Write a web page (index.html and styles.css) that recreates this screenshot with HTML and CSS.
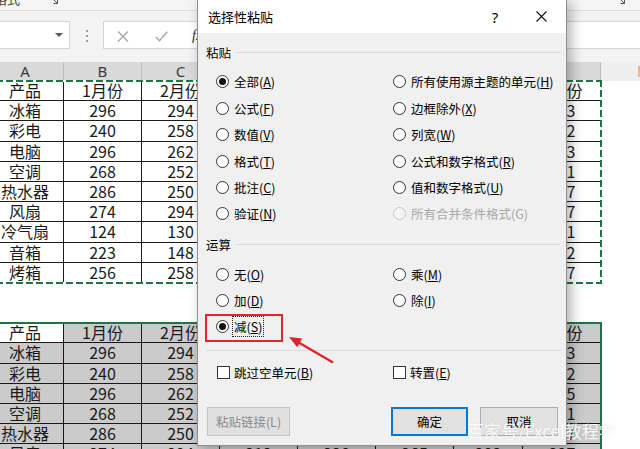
FILE: index.html
```html
<!DOCTYPE html>
<html lang="zh-CN">
<head>
<meta charset="utf-8">
<title>选择性粘贴</title>
<link rel="stylesheet" href="styles.css">
</head>
<body>
<div class="screen">
  <div class="ribbon">
    <span class="rb-text">格式</span>
    <svg class="launcher l1" width="9" height="9" viewBox="0 0 9 9"><path d="M0.5 4V0.5H4M2 2L7.5 7.5M7.5 3.5V7.5H3.5" fill="none" stroke="#555" stroke-width="1"/></svg>
    <svg class="launcher l2" width="9" height="9" viewBox="0 0 9 9"><path d="M0.5 4V0.5H4M2 2L7.5 7.5M7.5 3.5V7.5H3.5" fill="none" stroke="#555" stroke-width="1"/></svg>
  </div>
  <div class="fbar">
    <div class="namebox"><span class="caret"></span></div>
    <div class="grip"><i></i><i></i><i></i></div>
    <div class="fbox">
      <svg class="ic-x" width="12" height="11" viewBox="0 0 12 11"><path d="M1 0.5L11 10.5M11 0.5L1 10.5" stroke="#a6a6a6" stroke-width="1.3" fill="none"/></svg>
      <svg class="ic-check" width="13" height="11" viewBox="0 0 13 11"><path d="M0.8 6L4.5 9.8L12.2 0.8" stroke="#a6a6a6" stroke-width="1.4" fill="none"/></svg>
      <span class="fx">fx</span>
    </div>
  </div>

  <div class="sheet">
    <div class="colhead">
      <div class="ch sel">A</div><div class="ch sel">B</div><div class="ch sel">C</div><div class="ch sel">D</div>
      <div class="ch sel">E</div><div class="ch sel">F</div><div class="ch sel">G</div><div class="ch sel">H</div>
      <div class="ch plain"><span class="mark"></span></div>
    </div>

    <div class="tbl copy">
      <div class="row"><div class="c">产品</div><div class="c">1月份</div><div class="c">2月份</div><div class="c">3月份</div><div class="c">4月份</div><div class="c">5月份</div><div class="c">6月份</div><div class="c">7月份</div></div>
      <div class="row"><div class="c">冰箱</div><div class="c">296</div><div class="c">294</div><div class="c">281</div><div class="c">275</div><div class="c">262</div><div class="c">248</div><div class="c">263</div></div>
      <div class="row"><div class="c">彩电</div><div class="c">240</div><div class="c">258</div><div class="c">247</div><div class="c">236</div><div class="c">229</div><div class="c">241</div><div class="c">252</div></div>
      <div class="row"><div class="c">电脑</div><div class="c">296</div><div class="c">262</div><div class="c">278</div><div class="c">269</div><div class="c">284</div><div class="c">290</div><div class="c">273</div></div>
      <div class="row"><div class="c">空调</div><div class="c">268</div><div class="c">252</div><div class="c">294</div><div class="c">287</div><div class="c">276</div><div class="c">258</div><div class="c">261</div></div>
      <div class="row"><div class="c">热水器</div><div class="c">286</div><div class="c">250</div><div class="c">233</div><div class="c">246</div><div class="c">259</div><div class="c">272</div><div class="c">287</div></div>
      <div class="row"><div class="c">风扇</div><div class="c">274</div><div class="c">294</div><div class="c">212</div><div class="c">238</div><div class="c">265</div><div class="c">283</div><div class="c">297</div></div>
      <div class="row"><div class="c">冷气扇</div><div class="c">124</div><div class="c">130</div><div class="c">156</div><div class="c">171</div><div class="c">182</div><div class="c">195</div><div class="c">201</div></div>
      <div class="row"><div class="c">音箱</div><div class="c">223</div><div class="c">148</div><div class="c">165</div><div class="c">187</div><div class="c">203</div><div class="c">214</div><div class="c">222</div></div>
      <div class="row"><div class="c">烤箱</div><div class="c">256</div><div class="c">258</div><div class="c">243</div><div class="c">231</div><div class="c">264</div><div class="c">255</div><div class="c">247</div></div>
    </div>

    <div class="blank"></div>

    <div class="tbl selected">
      <div class="row"><div class="c active">产品</div><div class="c">1月份</div><div class="c">2月份</div><div class="c">3月份</div><div class="c">4月份</div><div class="c">5月份</div><div class="c">6月份</div><div class="c">7月份</div></div>
      <div class="row"><div class="c">冰箱</div><div class="c">296</div><div class="c">294</div><div class="c">281</div><div class="c">275</div><div class="c">262</div><div class="c">248</div><div class="c">263</div></div>
      <div class="row"><div class="c">彩电</div><div class="c">240</div><div class="c">258</div><div class="c">247</div><div class="c">236</div><div class="c">229</div><div class="c">241</div><div class="c">252</div></div>
      <div class="row"><div class="c">电脑</div><div class="c">296</div><div class="c">262</div><div class="c">278</div><div class="c">269</div><div class="c">284</div><div class="c">290</div><div class="c">275</div></div>
      <div class="row"><div class="c">空调</div><div class="c">268</div><div class="c">252</div><div class="c">294</div><div class="c">287</div><div class="c">276</div><div class="c">258</div><div class="c">261</div></div>
      <div class="row"><div class="c">热水器</div><div class="c">286</div><div class="c">250</div><div class="c">233</div><div class="c">246</div><div class="c">259</div><div class="c">272</div><div class="c">287</div></div>
      <div class="row"><div class="c">风扇</div><div class="c">274</div><div class="c">294</div><div class="c">212</div><div class="c">238</div><div class="c">265</div><div class="c">283</div><div class="c">297</div></div>
    </div>
  </div>

  <div class="dialog">
    <div class="titlebar">
      <span class="title">选择性粘贴</span>
      <span class="tb-btn help">?</span>
      <span class="tb-btn close"><svg width="11" height="11" viewBox="0 0 11 11"><path d="M0.5 0.5L10.5 10.5M10.5 0.5L0.5 10.5" stroke="#111" stroke-width="1.1" fill="none"/></svg></span>
    </div>

    <div class="group-label"><span>粘贴</span><i class="rule"></i></div>
    <div class="opts paste">
      <label class="opt"><span class="radio on"></span><span class="t">全部(<u>A</u>)</span></label>
      <label class="opt"><span class="radio"></span><span class="t">所有使用源主题的单元(<u>H</u>)</span></label>
      <label class="opt"><span class="radio"></span><span class="t">公式(<u>F</u>)</span></label>
      <label class="opt"><span class="radio"></span><span class="t">边框除外(<u>X</u>)</span></label>
      <label class="opt"><span class="radio"></span><span class="t">数值(<u>V</u>)</span></label>
      <label class="opt"><span class="radio"></span><span class="t">列宽(<u>W</u>)</span></label>
      <label class="opt"><span class="radio"></span><span class="t">格式(<u>T</u>)</span></label>
      <label class="opt"><span class="radio"></span><span class="t">公式和数字格式(<u>R</u>)</span></label>
      <label class="opt"><span class="radio"></span><span class="t">批注(<u>C</u>)</span></label>
      <label class="opt"><span class="radio"></span><span class="t">值和数字格式(<u>U</u>)</span></label>
      <label class="opt"><span class="radio"></span><span class="t">验证(<u>N</u>)</span></label>
      <label class="opt disabled"><span class="radio"></span><span class="t">所有合并条件格式(G)</span></label>
    </div>

    <div class="group-label ops-label"><span>运算</span><i class="rule"></i></div>
    <div class="opts ops">
      <label class="opt"><span class="radio"></span><span class="t">无(<u>O</u>)</span></label>
      <label class="opt"><span class="radio"></span><span class="t">乘(<u>M</u>)</span></label>
      <label class="opt"><span class="radio"></span><span class="t">加(<u>D</u>)</span></label>
      <label class="opt"><span class="radio"></span><span class="t">除(<u>I</u>)</span></label>
      <label class="opt focus"><span class="radio on"></span><span class="t focus-text">减(<u>S</u>)</span><span class="hl"></span></label>
    </div>

    <div class="sep"></div>

    <div class="checks">
      <label class="opt"><span class="cb"></span><span class="t">跳过空单元(<u>B</u>)</span></label>
      <label class="opt"><span class="cb"></span><span class="t">转置(<u>E</u>)</span></label>
    </div>

    <div class="buttons">
      <span class="btn disabled link">粘贴链接(L)</span>
      <span class="btn default ok">确定</span>
      <span class="btn cancel">取消</span>
    </div>
  </div>

  <svg class="arrow" width="640" height="449" viewBox="0 0 640 449">
    <line x1="333" y1="362.5" x2="297" y2="341.5" stroke="#d9252b" stroke-width="2.4"/>
    <polygon points="289,337 302.2,338.4 297.2,347.2" fill="#d9252b"/>
  </svg>

  <div class="watermark">百家号/Excel教程学</div>
</div>
</body>
</html>
```

FILE: styles.css
```css
* { box-sizing: border-box; margin: 0; padding: 0; }
html, body { width: 640px; height: 449px; overflow: hidden; background: #fff; }
body { font-family: "Noto Sans CJK SC", "Noto Sans", sans-serif; color: #000; }

.screen { position: relative; width: 640px; height: 449px; overflow: hidden; background: #fff; }

/* ribbon */
.ribbon {
  height: 11px; background: #f5f5f5; border-bottom: 1px solid #dcdcdc;
  display: flex; align-items: flex-start; overflow: hidden;
}
.rb-text { font-size: 13px; line-height: 13px; margin-top: -8px; margin-left: -6px; color: #444; }
.launcher { flex: none; margin-top: -4px; }
.l1 { margin-left: 30px; }
.l2 { margin-left: auto; margin-right: 14px; }

/* formula bar */
.fbar {
  height: 51px; background: #f3f3f3; display: flex; align-items: flex-start;
  padding-top: 10px;
}
.namebox {
  width: 80px; margin-left: -10px; height: 28px; background: #fff;
  border: 1px solid #d4d4d4; display: flex; align-items: center; justify-content: flex-end;
  padding-right: 6px;
}
.caret { width: 0; height: 0; border-left: 4px solid transparent; border-right: 4px solid transparent; border-top: 4px solid #5a5a5a; }
.grip { margin-left: 16px; margin-top: 9px; display: flex; flex-direction: column; gap: 3px; }
.grip i { display: block; width: 2px; height: 2px; background: #9a9a9a; }
.fbox {
  flex: 1; margin-left: 15px; height: 28px; background: #fff;
  border: 1px solid #d4d4d4; border-right: none; display: flex; align-items: center;
  padding-top: 2px;
}
.ic-x { margin-left: 13px; }
.ic-check { margin-left: 26px; }
.fx { margin-left: 24px; font-family: "Liberation Serif", serif; font-style: italic; font-size: 14px; color: #333; }

/* sheet */
.colhead, .row {
  display: grid;
  grid-template-columns: 77px 78px 78px 78px 78px 78px 69px 78px;
  margin-left: -13px;
}
.colhead { grid-template-columns: 77px 78px 78px 78px 78px 78px 69px 78px 60px; height: 19px; }
.ch {
  background: #d9d9d9; border-right: 1px solid #bdbdbd; font-size: 15px; line-height: 19px;
  text-align: center; color: #3a3a3a; font-family: "Noto Sans", sans-serif;
}
.ch.plain { background: #eeeeee; border-right: none; position: relative; }
.mark { position: absolute; left: 37px; top: 4px; width: 3px; height: 11px; background: #f0b48a; }

.tbl { position: relative; width: 614px; margin-left: -13px; }
.tbl .row { margin-left: 0; height: 20.2px; }
.c {
  border-right: 1px solid #1a1a1a; border-bottom: 1px solid #1a1a1a;
  font-size: 16px; line-height: 19px; text-align: center; white-space: nowrap; overflow: hidden;
  color: #1a1a1a;
}
.copy .c:last-child { border-right: none; }
.copy .row:last-child .c { border-bottom: none; }
.copy::after {
  content: ""; position: absolute; left: -1px; right: -1px; top: -1px; bottom: -1px; pointer-events: none;
  background:
    repeating-linear-gradient(90deg, #217346 0 7px, #fff 7px 10px) left top / 100% 2px no-repeat,
    repeating-linear-gradient(90deg, #217346 0 7px, #fff 7px 10px) left bottom / 100% 2px no-repeat,
    repeating-linear-gradient(180deg, #217346 0 7px, #fff 7px 10px) right top / 2px 100% no-repeat,
    repeating-linear-gradient(180deg, #217346 0 7px, #fff 7px 10px) left top / 2px 100% no-repeat;
}
.blank { height: 40.4px; }
.selected .c { background: #cbcbcb; }
.selected .c.active { background: #fff; }
.selected .c:last-child { border-right: none; }
.selected::after {
  content: ""; position: absolute; left: -1px; right: -1px; top: -1px; bottom: 0; pointer-events: none;
  border-top: 2px solid #217346; border-right: 2px solid #217346;
}

/* dialog */
.dialog {
  position: absolute; left: 197px; top: -1px; width: 370px; height: 447px;
  background: #f0f0f0; border: 1px solid #8f8f8f;
  box-shadow: 4px 3px 12px rgba(0, 0, 0, 0.3);
  font-size: 12px; color: #000;
}
.titlebar { height: 33px; background: #fff; display: flex; align-items: center; padding-left: 10px; }
.title { font-size: 13px; flex: 1; }
.tb-btn { width: 46px; height: 33px; display: flex; align-items: center; justify-content: center; }
.help { font-family: "Noto Sans", sans-serif; font-size: 15px; }
.close { margin-right: 2px; }

.group-label {
  display: flex; align-items: center; gap: 5px; height: 20px; margin-top: 9px;
  padding-left: 8px; padding-right: 6px; font-size: 12.5px;
}
.group-label .rule { flex: 1; height: 1px; background: #dadada; }
.ops-label { margin-top: 7.8px; }

.opts {
  display: grid; grid-template-columns: 177px 1fr; grid-auto-rows: 26.4px;
  padding-left: 18px; margin-top: 6.8px;
}
.ops { grid-auto-rows: 26px; margin-top: 7px; }
.opt { display: flex; align-items: center; gap: 5px; white-space: nowrap; line-height: 17px; font-size: 12.5px; }
.opt .t { display: inline-block; }
.opt u { text-decoration: underline; text-underline-offset: 1px; }
.radio {
  flex: none; width: 13px; height: 13px; border: 1px solid #333; border-radius: 50%; background: #fff;
  display: inline-flex; align-items: center; justify-content: center;
}
.radio.on::after { content: ""; width: 7px; height: 7px; border-radius: 50%; background: #111; }
.opt.disabled { color: #a8a8a8; }
.opt.disabled .radio { border-color: #c8c8c8; background: #f4f4f4; }

.opt.focus { position: relative; }
.focus-text { outline: 1px dotted #222; outline-offset: 1px; }
.hl {
  position: absolute; left: -11px; top: 0; width: 78px; height: 28px;
  border: 2px solid #e0262c;
}

.sep { height: 1px; background: #dadada; margin: 10px 5px 0 8px; }

.checks {
  display: grid; grid-template-columns: 176px 1fr; height: 20px; margin-top: 12px; padding-left: 19px;
}
.cb { flex: none; width: 13px; height: 13px; border: 1px solid #333; background: #fff; }
.checks .opt { gap: 4px; }

.buttons { display: flex; margin-top: 24px; padding-left: 9px; padding-right: 8px; gap: 12px; height: 29px; }
.btn {
  height: 29px; display: flex; align-items: center; justify-content: center;
  background: #e1e1e1; border: 1px solid #adadad; font-size: 12.5px;
}
.btn.link { width: 83px; margin-right: auto; color: #8a8a8a; background: #e0e0e0; border-color: #c4c4c4; }
.btn.ok { width: 77px; border: 2px solid #0078d7; }
.btn.cancel { width: 78px; }

.arrow { position: absolute; left: 0; top: 0; pointer-events: none; }

.watermark {
  position: absolute; left: 467px; top: 420px; font-size: 17px; line-height: 22px;
  color: rgba(255, 255, 255, 0.9); white-space: nowrap;
  text-shadow: 0 0 2px rgba(0, 0, 0, 0.08);
}
```
